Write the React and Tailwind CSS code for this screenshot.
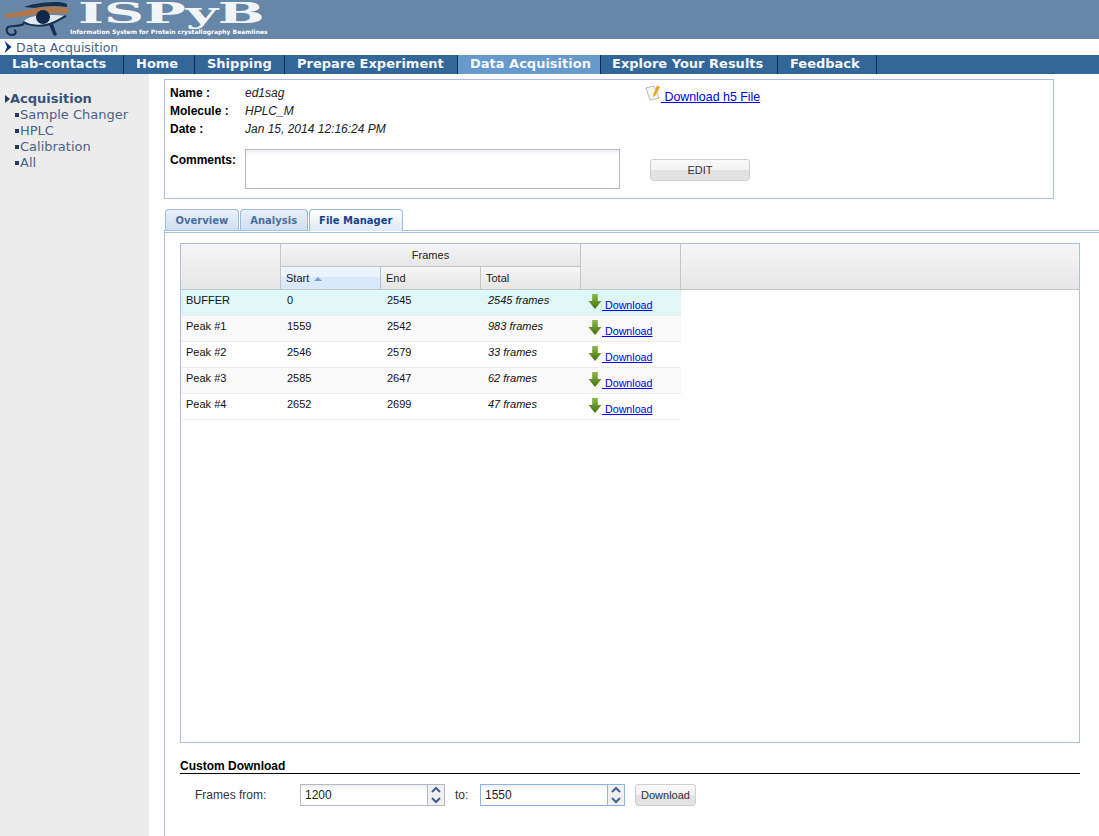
import React from "react";

const navItems = [
  { label: "Lab-contacts", w: "w-[123px] pl-[11px]" },
  { label: "Home", w: "w-[71px] pl-[12px]" },
  { label: "Shipping", w: "w-[90px] pl-[12px]" },
  { label: "Prepare Experiment", w: "w-[173px] pl-[12px]" },
  { label: "Data Acquisition", w: "w-[143px] pl-[12px]" },
  { label: "Explore Your Results", w: "w-[177px] pl-[11px]" },
  { label: "Feedback", w: "w-[99px] pl-[12px]" },
];
const sideItems = ["Sample Changer", "HPLC", "Calibration", "All"];
const rows = [
  { name: "BUFFER", start: "0", end: "2545", total: "2545 frames", bg: "bg-[#dff7f7]" },
  { name: "Peak #1", start: "1559", end: "2542", total: "983 frames", bg: "bg-[#f9f9f9]" },
  { name: "Peak #2", start: "2546", end: "2579", total: "33 frames", bg: "bg-white" },
  { name: "Peak #3", start: "2585", end: "2647", total: "62 frames", bg: "bg-[#f9f9f9]" },
  { name: "Peak #4", start: "2652", end: "2699", total: "47 frames", bg: "bg-white" },
];

function EyeLogo() {
  return (
    <svg width="72" height="39" viewBox="0 0 72 39" className="shrink-0">
      {/* brow */}
      <path d="M24 7 C34 3 48 2 58 2 C62 2 65 3 67 4 L67 7 C56 5 44 6 34 8 Z" fill="#17304f" />
      {/* brown band */}
      <path d="M5 14 C18 13 28 9 38 8 C48 6 58 7 68 8 L68 14 C58 13 50 13 42 14 C30 15 16 18 6 18 Z" fill="#b0774a" />
      {/* eye */}
      <path d="M24 21 C30 15 44 14 66 16 C58 20 50 24 40 25 C34 25 28 24 24 21 Z" fill="#dfe8ef" />
      <circle cx="43" cy="17" r="7" fill="#12284a" />
      <path d="M23 22 C30 26 42 27 50 24 C56 22 60 19 66 16" fill="none" stroke="#17304f" strokeWidth="2" />
      {/* tail */}
      <path d="M24 24 C18 27 12 25 8 27 C5 30 7 35 12 35 C16 35 17 31 14 30" fill="none" stroke="#17304f" strokeWidth="2" />
      <path d="M49 25 L54 36 L57 35 L53 24 Z" fill="#17304f" />
    </svg>
  );
}

function Header() {
  return (
    <div className="h-[39px] bg-[#6787a8] flex">
      <EyeLogo />
      <div className="relative w-[200px]">
        <div className="absolute left-[6px] top-[1px] text-[28px] leading-[26px] font-bold text-[#f2f5f8] font-['DejaVu_Serif',serif] origin-left scale-x-[1.98] whitespace-nowrap">ISPyB</div>
        <div className="absolute left-[-2px] top-[27px] text-[6px] leading-[10px] font-bold text-white font-['DejaVu_Sans',sans-serif] whitespace-nowrap">Information System for Protein crystallography Beamlines</div>
      </div>
    </div>
  );
}

function Nav() {
  return (
    <div className="h-[19px] bg-[#336699] flex pl-[1px] font-['DejaVu_Sans',sans-serif]">
      {navItems.map((item) => (
        <div
          key={item.label}
          className={`h-[19px] ${item.w} text-[13px] leading-[17px] font-bold text-[#f4f7fa] border-r border-[#0a2a6a] whitespace-nowrap ${item.label === "Data Acquisition" ? "bg-[#6699cc]" : ""}`}
        >
          {item.label}
        </div>
      ))}
    </div>
  );
}

function Sidebar() {
  return (
    <div className="w-[149px] shrink-0 bg-[#ececec] pt-[17px] pl-[5px] font-['DejaVu_Sans',sans-serif] text-[13px] leading-[16px] text-[#4a6286]">
      <div className="flex items-center font-bold text-[#36527c]">
        <span className="w-0 h-0 border-y-[4px] border-y-transparent border-l-[5px] border-l-[#23395d]" />
        Acquisition
      </div>
      {sideItems.map((item) => (
        <div key={item} className="flex items-center pl-[10px]">
          <span className="w-[4px] h-[4px] bg-[#23395d] mr-[1px]" />
          {item}
        </div>
      ))}
    </div>
  );
}

function NoteIcon() {
  return (
    <svg width="16" height="17" viewBox="0 0 16 17" className="shrink-0">
      <path d="M1 3 L9 1 L14 13 L5 15 Z" fill="#f8f8f4" stroke="#b9b9b0" />
      <path d="M12 0.5 L15 2 L10 11 L8 12 L8.5 9 Z" fill="#f0a020" />
    </svg>
  );
}

function ArrowIcon() {
  return (
    <svg width="14" height="18" viewBox="0 0 15 18" className="shrink-0">
      <defs>
        <linearGradient id="arrowGreen" x1="0" y1="0" x2="0" y2="1">
          <stop offset="0" stopColor="#8fb84a" />
          <stop offset="1" stopColor="#3f6f10" />
        </linearGradient>
      </defs>
      <path d="M4.5 0.5 H10.5 V8 H14.5 L7.5 16.5 L0.5 8 H4.5 Z" fill="url(#arrowGreen)" />
    </svg>
  );
}

function InfoBox() {
  return (
    <div className="w-[890px] h-[120px] mt-[5px] ml-[15px] border border-[#a5c1e6] relative font-['Liberation_Sans',sans-serif] text-[12px]">
      <div className="flex pt-[5px] pl-[5px]">
        <div className="w-[475px]">
          {[["Name :", "ed1sag"], ["Molecule :", "HPLC_M"], ["Date :", "Jan 15, 2014 12:16:24 PM"]].map(([k, v]) => (
            <div key={k} className="flex h-[18px] leading-[16px]">
              <span className="w-[75px] font-bold text-black">{k}</span>
              <span className="italic text-[#222]">{v}</span>
            </div>
          ))}
        </div>
        <a className="flex items-start text-[12.4px] text-[#0000ee] underline">
          <NoteIcon />
          <span className="mt-[3px] whitespace-pre"> Download h5 File</span>
        </a>
      </div>
      <div className="flex mt-[10px] pl-[5px]">
        <span className="w-[75px] font-bold text-black mt-[3px] leading-[16px]">Comments:</span>
        <div className="w-[375px] h-[40px] border border-[#b5b8c8] bg-gradient-to-b from-[#f0f0f0] to-white to-[15%]" />
        <div className="ml-[30px] mt-[10px] w-[100px] h-[22px] rounded-[3px] border border-[#cfcfcf] bg-[linear-gradient(#fafafa_0%,#f2f2f2_50%,#e2e2e2_50%,#e4e4e4_100%)] text-center text-[11px] leading-[20px] text-[#333]">EDIT</div>
      </div>
    </div>
  );
}

function Tabs() {
  const tabs = ["Overview", "Analysis", "File Manager"];
  return (
    <div className="flex gap-[1px] h-[21px] mt-[10px] pl-[16px] font-['DejaVu_Sans',sans-serif] text-[10px] font-bold">
      {tabs.map((t) => (
        <div
          key={t}
          className={`px-[9.5px] h-[21px] leading-[21px] border border-b-0 border-[#9cbbe2] rounded-t-[4px] whitespace-nowrap ${t === "File Manager" ? "h-[22px] z-10 text-[#15428b] bg-gradient-to-b from-white to-[#dfe8f6]" : "text-[#4a6f9e] bg-gradient-to-b from-[#e8f0fa] to-[#cfdff3]"}`}
        >
          {t}
        </div>
      ))}
    </div>
  );
}

function HeadCell({ className = "", children }) {
  return (
    <div className={`border-r border-b border-[#c5c5c5] px-[5px] text-[11px] text-[#222] ${className}`}>{children}</div>
  );
}

function Grid() {
  const headBg = "bg-gradient-to-b from-[#f6f6f6] to-[#e6e6e6]";
  return (
    <div className="h-[500px] border border-[#a5c1e6] font-['Liberation_Sans',sans-serif]">
      <div className="grid grid-cols-[100px_100px_100px_100px_100px_1fr] grid-rows-[23px_23px]">
        <HeadCell className={`row-span-2 ${headBg}`} />
        <HeadCell className={`col-span-3 text-center leading-[22px] ${headBg}`}>Frames</HeadCell>
        <HeadCell className={`row-span-2 ${headBg}`} />
        <HeadCell className={`row-span-2 border-r-0 ${headBg}`} />
        <HeadCell className="leading-[22px] border-r-[#a5c1e6] bg-[linear-gradient(#ebf3fd_0%,#ebf3fd_45%,#d9e8fb_45%,#d9e8fb_100%)]">
          Start
          <span className="inline-block ml-[5px] mb-[1px] w-0 h-0 border-x-[4px] border-x-transparent border-b-[4px] border-b-[#7d9fd0]" />
        </HeadCell>
        <HeadCell className={`leading-[22px] ${headBg}`}>End</HeadCell>
        <HeadCell className={`leading-[22px] ${headBg}`}>Total</HeadCell>
      </div>
      {rows.map((r) => (
        <div key={r.name} className={`w-[500px] h-[26px] flex border-b border-[#ededed] text-[11px] text-[#111] ${r.bg}`}>
          <div className="w-[100px] pl-[5px] pt-[4px] leading-[13px]">{r.name}</div>
          <div className="w-[100px] pl-[6px] pt-[4px] leading-[13px]">{r.start}</div>
          <div className="w-[100px] pl-[6px] pt-[4px] leading-[13px]">{r.end}</div>
          <div className="w-[100px] pl-[7px] pt-[4px] leading-[13px] italic">{r.total}</div>
          <a className="w-[100px] pl-[7px] pt-[3px] flex items-start underline text-[10.7px] text-[#0000ee]">
            <ArrowIcon />
            <span className="mt-[6px] leading-[13px] whitespace-pre"> Download</span>
          </a>
        </div>
      ))}
    </div>
  );
}

function Spinner({ value, active }) {
  const color = active ? "border-[#8eb4e3]" : "border-[#b5b8c8]";
  return (
    <div className={`flex w-[145px] h-[22px] border ${color}`}>
      <div className="flex-1 pl-[4px] text-[12px] leading-[21px] text-[#222] bg-gradient-to-b from-[#eeeeee] to-white to-[25%]">{value}</div>
      <div className={`w-[17px] border-l ${color} flex flex-col bg-[#f0f0f0]`}>
        {["M1 6 L5 2 L9 6", "M1 2 L5 6 L9 2"].map((d) => (
          <div key={d} className="h-[10px] flex items-center justify-center">
            <svg width="10" height="8" viewBox="0 0 10 8">
              <path d={d} fill="none" stroke="#3f5f94" strokeWidth="2" />
            </svg>
          </div>
        ))}
      </div>
    </div>
  );
}

function CustomDownload() {
  return (
    <div className="mt-[16px] font-['Liberation_Sans',sans-serif]">
      <div className="border-b border-black text-[12px] font-bold leading-[14px] h-[15px]">Custom Download</div>
      <div className="flex items-center h-[22px] mt-[10px] text-[12px] leading-[22px] text-[#333]">
        <span className="w-[120px] pl-[15px]">Frames from:</span>
        <Spinner value="1200" />
        <span className="w-[35px] pl-[10px]">to:</span>
        <Spinner value="1550" active />
        <div className="ml-[10px] w-[61px] h-[22px] rounded-[3px] border border-[#cfcfcf] bg-[linear-gradient(#fafafa_0%,#f2f2f2_50%,#e2e2e2_50%,#e4e4e4_100%)] text-center text-[11px] leading-[20px]">Download</div>
      </div>
    </div>
  );
}

export default function App() {
  return (
    <div className="w-[1099px] h-[836px] bg-white overflow-hidden flex flex-col">
      <Header />
      <div className="h-[16px] flex items-center pl-[4px] font-['DejaVu_Sans',sans-serif] text-[12.5px] leading-[16px] text-[#4a5f80]">
        <svg width="8" height="12" viewBox="0 0 8 12" className="mr-[4px]">
          <path d="M0.5 0 L7.5 6 L0.5 12 L3 6 Z" fill="#0b2d73" />
        </svg>
        <span className="mt-[1px]">Data Acquisition</span>
      </div>
      <Nav />
      <div className="flex flex-1 min-h-0">
        <Sidebar />
        <div className="flex-1 min-w-0">
          <InfoBox />
          <Tabs />
          <div className="ml-[15px] h-[606px] border-l border-t-[3px] border-[#a5c1e6] border-double pl-[15px] pt-[10px]">
            <div className="w-[900px]">
              <Grid />
              <CustomDownload />
            </div>
          </div>
        </div>
      </div>
    </div>
  );
}
